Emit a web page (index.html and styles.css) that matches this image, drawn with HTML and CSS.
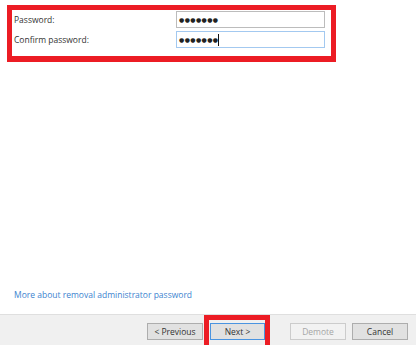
FILE: index.html
```html
<!DOCTYPE html>
<html>
<head>
<meta charset="utf-8">
<link rel="stylesheet" href="styles.css">
</head>
<body>
<div class="page">
  <div class="content">
    <div class="form">
      <div class="label">Password:</div>
      <div class="field"><span class="dots">●●●●●●●</span></div>
      <div class="label">Confirm password:</div>
      <div class="field focused"><span class="dots">●●●●●●●</span><span class="caret"></span></div>
    </div>
    <a class="link" href="#">More about removal administrator password</a>
  </div>
  <div class="footer">
    <button class="btn prev">&lt; Previous</button>
    <span class="hl-wrap"><button class="btn next">Next &gt;</button><span class="hl"></span></span>
    <button class="btn demote" disabled>Demote</button>
    <button class="btn cancel">Cancel</button>
  </div>
</div>
</body>
</html>
```

FILE: styles.css
```css
html, body {
  margin: 0;
  padding: 0;
  background: #ffffff;
}
body {
  font-family: "Open Sans", "Noto Sans", sans-serif;
  font-size: 8.5px;
  color: #333333;
}
.page {
  width: 416px;
  height: 345px;
  display: flex;
  flex-direction: column;
  overflow: hidden;
}
.content {
  flex: 1;
  display: flex;
  flex-direction: column;
  padding: 5px 0 0 7px;
}
.form {
  width: 329px;
  box-sizing: border-box;
  border: 5px solid #ec1c24;
  border-bottom-width: 6px;
  padding: 1px 6px 8px 2px;
  display: grid;
  grid-template-columns: 162px 149px;
  grid-auto-rows: 17px;
  row-gap: 3px;
  align-items: center;
}
.label {
  line-height: 12px;
}
.field {
  height: 17px;
  box-sizing: border-box;
  border: 1px solid #bcbcbc;
  background: #ffffff;
  display: flex;
  align-items: center;
  padding-left: 2px;
}
.field.focused {
  border-color: #a3c9f0;
}
.dots {
  font-family: "DejaVu Sans", sans-serif;
  font-size: 6px;
  letter-spacing: 0.4px;
  color: #222222;
  line-height: 10px;
}
.caret {
  width: 1px;
  height: 12px;
  background: #111111;
}
.link {
  margin-top: auto;
  margin-bottom: 13px;
  margin-left: 7px;
  color: #3d84cf;
  text-decoration: none;
  line-height: 12px;
  align-self: flex-start;
}
.footer {
  height: 31px;
  box-sizing: border-box;
  border-top: 1px solid #dfdfdf;
  background: #f0f0f0;
  display: flex;
  justify-content: flex-end;
  align-items: flex-start;
  padding: 8px 8px 0 0;
}
.btn {
  width: 56px;
  height: 17px;
  box-sizing: border-box;
  border: 1px solid #adadad;
  background: #e1e1e1;
  font-family: inherit;
  font-size: 8.5px;
  color: #333333;
  padding: 0;
  margin: 0;
  line-height: 15px;
}
.hl-wrap {
  position: relative;
  display: flex;
  margin-left: 7px;
  margin-right: 25px;
}
.next {
  width: 55px;
  border-color: #4a94e0;
}
.hl {
  position: absolute;
  left: -6px;
  right: -5px;
  top: -8px;
  bottom: -20px;
  border: 5px solid #ec1c24;
}
.demote {
  background: #f2f2f2;
  border-color: #cccccc;
  color: #a6a6a6;
  margin-right: 6px;
}
```
